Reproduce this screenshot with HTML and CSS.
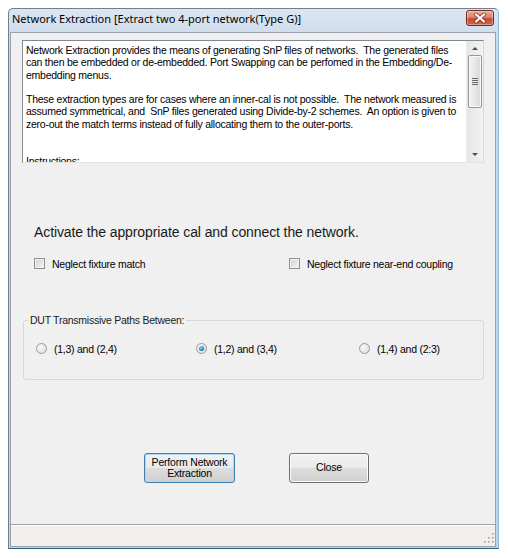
FILE: index.html
```
<!DOCTYPE html>
<html>
<head>
<meta charset="utf-8">
<link rel="stylesheet" href="styles.css">
</head>
<body>
<div class="window">
  <div class="titlebar">
    <span class="title">Network Extraction [Extract two 4-port network(Type G)]</span>
    <span class="close-x">
      <svg width="28" height="16" viewBox="0 0 28 16">
        <path d="M10 4.5 L18 11.5 M18 4.5 L10 11.5" stroke="#5a1a12" stroke-width="4" stroke-linecap="round" opacity="0.55"/>
        <path d="M10 4.5 L18 11.5 M18 4.5 L10 11.5" stroke="#ffffff" stroke-width="2.2" stroke-linecap="round"/>
      </svg>
    </span>
  </div>
  <div class="client">
    <div class="content">
      <div class="textbox">
        <div class="text">Network Extraction provides the means of generating SnP files of networks.  The generated files
can then be embedded or de-embedded. Port Swapping can be perfomed in the Embedding/De-
embedding menus.

These extraction types are for cases where an inner-cal is not possible.  The network measured is
assumed symmetrical, and  SnP files generated using Divide-by-2 schemes.  An option is given to
zero-out the match terms instead of fully allocating them to the outer-ports.


Instructions:</div>
        <div class="vscroll">
          <span class="arrow up"></span>
          <span class="thumb"><span class="grip-lines"></span></span>
          <span class="arrow down"></span>
        </div>
      </div>

      <div class="headline">Activate the appropriate cal and connect the network.</div>

      <div class="checks">
        <label class="check"><span class="box"></span><span class="lbl">Neglect fixture match</span></label>
        <label class="check"><span class="box"></span><span class="lbl">Neglect fixture near-end coupling</span></label>
      </div>

      <fieldset class="group">
        <legend>DUT Transmissive Paths Between:</legend>
        <div class="radios">
          <label class="radio"><span class="dot"></span><span class="lbl">(1,3) and (2,4)</span></label>
          <label class="radio"><span class="dot on"></span><span class="lbl">(1,2) and (3,4)</span></label>
          <label class="radio"><span class="dot"></span><span class="lbl">(1,4) and (2:3)</span></label>
        </div>
      </fieldset>

      <div class="buttons">
        <span class="btn primary">Perform Network<br>Extraction</span>
        <span class="btn close">Close</span>
      </div>
    </div>
    <div class="statusbar">
      <svg class="sizegrip" width="10" height="10" viewBox="0 0 10 10">
        <g fill="#ffffff">
          <rect x="9" y="9" width="1" height="1"/><rect x="5" y="9" width="1" height="1"/><rect x="1" y="9" width="1" height="1"/>
          <rect x="9" y="5" width="1" height="1"/><rect x="5" y="5" width="1" height="1"/><rect x="9" y="1" width="1" height="1"/>
        </g>
        <g fill="#a0a0a0">
          <rect x="8" y="8" width="1.6" height="1.6"/><rect x="4" y="8" width="1.6" height="1.6"/><rect x="0" y="8" width="1.6" height="1.6"/>
          <rect x="8" y="4" width="1.6" height="1.6"/><rect x="4" y="4" width="1.6" height="1.6"/><rect x="8" y="0" width="1.6" height="1.6"/>
        </g>
      </svg>
    </div>
  </div>
</div>
</body>
</html>
```
FILE: styles.css
```
* { box-sizing: border-box; }
html, body { margin: 0; padding: 0; background: #ffffff; }
body { font-family: "Liberation Sans", Arial, sans-serif; color: #000; }

.window {
  margin: 8px 0 0 8px;
  width: 491px;
  height: 541px;
  display: flex;
  flex-direction: column;
  background: linear-gradient(#dce6f2, #c8d7e8 40px, #c3d3e6);
  border: 1px solid #6f7f90;
  border-right-color: #86bde0;
  border-bottom-color: #2d6074;
  border-radius: 5px 5px 0 0;
}

.titlebar {
  height: 23px;
  display: flex;
  align-items: flex-start;
  justify-content: space-between;
  padding: 0 4px 0 3px;
}
.title {
  font-family: "Noto Sans", "Open Sans", sans-serif;
  font-size: 11px;
  letter-spacing: 0;
  line-height: 16px;
  margin-top: 2px;
  color: #000;
}
.close-x {
  margin-top: 1px;
  width: 28px;
  height: 16px;
  display: block;
  border: 1px solid #6e2a22;
  border-radius: 3px;
  background: linear-gradient(#e9a99b 0%, #d98571 45%, #c74a36 55%, #cf6a4f 100%);
  box-shadow: inset 0 0 0 1px rgba(255,255,255,0.35);
  overflow: hidden;
}
.close-x svg { display: block; margin: -1px 0 0 -1px; }

.client {
  margin: 0 2px 1px 1px;
  height: 515px;
  display: flex;
  flex-direction: column;
  background: #f0f0f0;
  border: 1px solid #9aa3ad;
}
.content {
  flex: 1;
  display: flex;
  flex-direction: column;
}

.textbox {
  margin: 7px 11px 0 11px;
  height: 123px;
  display: flex;
  background: #fff;
  border: 1px solid #828790;
  border-right-color: #d8d8d8;
  border-bottom-color: #e3e3e3;
}
.text {
  flex: 1;
  overflow: hidden;
  white-space: pre;
  padding: 3px 0 0 3px;
  font-size: 10.5px;
  letter-spacing: -0.25px;
  line-height: 12.3px;
}
.vscroll {
  width: 17px;
  display: flex;
  flex-direction: column;
  align-items: center;
  background: linear-gradient(90deg, #e6e6e6, #f2f2f2);
  border-left: 1px solid #eaeaea;
}
.arrow {
  width: 0; height: 0;
  border-left: 3px solid transparent;
  border-right: 3px solid transparent;
}
.arrow.up { border-bottom: 3px solid #4d4d4d; margin-top: 6px; }
.arrow.down { border-top: 3px solid #4d4d4d; margin-top: auto; margin-bottom: 6px; }
.thumb {
  margin-top: 5px;
  width: 14px;
  height: 53px;
  border: 1px solid #979797;
  border-radius: 2px;
  background: linear-gradient(90deg, #f4f4f4, #e6e6e6 50%, #d8d8d8);
  box-shadow: inset 0 0 0 1px #fafafa;
  display: flex;
  align-items: center;
  justify-content: center;
}
.grip-lines {
  width: 6px;
  height: 7px;
  background: repeating-linear-gradient(#6a6a6a 0 1px, transparent 1px 2px);
}

.headline {
  margin: 61px 0 0 23px;
  font-size: 14px;
  letter-spacing: -0.1px;
  line-height: 16px;
  color: #1a1a1a;
}

.checks {
  margin: 17px 0 0 23px;
  display: grid;
  grid-template-columns: 255px auto;
}
.check, .radio {
  display: flex;
  align-items: center;
  height: 13px;
  font-size: 10.5px;
  letter-spacing: -0.25px;
}
.box {
  width: 11px;
  height: 11px;
  border: 1px solid #8e8f8f;
  background: linear-gradient(135deg, #cdd0d4, #f6f6f6);
  box-shadow: inset 0 0 0 1px #f3f3f3;
}
.lbl { margin-left: 7px; }

.group {
  margin: 44px 11px 0 12px;
  padding: 0 4px 24px 4px;
  border: 1px solid #d3d9de;
  border-radius: 3px;
  min-width: 0;
}
.group legend {
  padding: 0 2px;
  font-size: 10.5px;
  letter-spacing: -0.25px;
  line-height: 13px;
  color: #1a1a1a;
}
.radios {
  margin: 15px 0 0 8px;
  display: grid;
  grid-template-columns: 160px 163px auto;
}
.dot {
  width: 11px;
  height: 11px;
  border-radius: 50%;
  border: 1px solid #999a9b;
  background: radial-gradient(circle at 35% 35%, #f8f8f8, #d9d9d9);
  display: flex;
  align-items: center;
  justify-content: center;
}
.dot.on::after {
  content: "";
  width: 5px;
  height: 5px;
  border-radius: 50%;
  background: radial-gradient(circle at 40% 35%, #9fd8f4, #2a79ad 60%, #175a87);
}

.buttons {
  margin: 73px 0 0 133px;
  display: flex;
  gap: 54px;
}
.btn {
  height: 30px;
  display: flex;
  align-items: center;
  justify-content: center;
  text-align: center;
  font-size: 10.5px;
  letter-spacing: -0.2px;
  line-height: 11.5px;
  border-radius: 3px;
  color: #000;
}
.btn.primary {
  width: 91px;
  border: 1px solid #3c7fb1;
  background: linear-gradient(#f2f2f2 0%, #ebebeb 48%, #dddddd 52%, #cfcfcf 100%);
  box-shadow: inset 0 0 0 1px #a7dcf5;
}
.btn.close {
  width: 80px;
  border: 1px solid #707070;
  background: linear-gradient(#f2f2f2 0%, #ebebeb 48%, #dddddd 52%, #cfcfcf 100%);
  box-shadow: inset 0 0 0 1px #fbfbfb;
}

.statusbar {
  height: 22px;
  border-top: 1px solid #a0a0a0;
  box-shadow: inset 0 1px 0 #ffffff;
  background: #f1efee;
  display: flex;
  justify-content: flex-end;
  align-items: flex-end;
  padding: 0 1px 3px 0;
}
.sizegrip { display: block; }
```
